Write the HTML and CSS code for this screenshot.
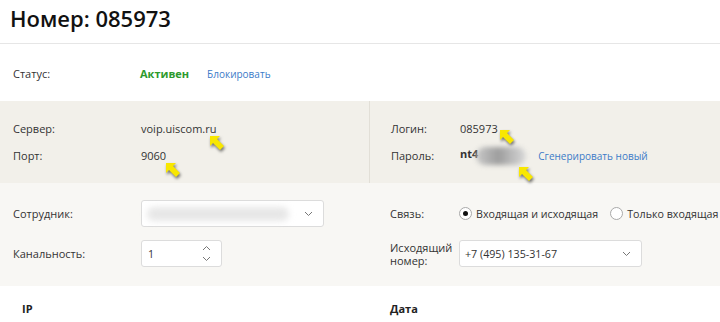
FILE: index.html
```html
<!DOCTYPE html>
<html lang="ru">
<head>
    <meta charset="UTF-8" />
    <meta name="viewport" content="width=device-width, initial-scale=1">
    <title>Номер: 085973</title>
    <link rel="stylesheet" href="styles.css">
</head>
<body>
<header class="page-head">
    <h1>Номер: 085973</h1>
</header>

<section class="status-row">
    <div class="field">
        <div class="field-label">Статус:</div>
        <span class="state-active">Активен</span>
        <a class="link" href="#">Блокировать</a>
    </div>
</section>

<section class="band band-creds">
    <div class="col">
        <div class="field">
            <div class="field-label">Сервер:</div>
            <span class="marked">voip.uiscom.ru
                <svg class="pointer p-server" width="17" height="17" viewBox="0 0 17 17"><polygon points="1,1 11,1 8,4 15,11 11,15 4,8 1,11" /></svg>
            </span>
        </div>
        <div class="field">
            <div class="field-label">Порт:</div>
            <span class="marked">9060
                <svg class="pointer p-port" width="17" height="17" viewBox="0 0 17 17"><polygon points="1,1 11,1 8,4 15,11 11,15 4,8 1,11" /></svg>
            </span>
        </div>
    </div>
    <div class="col col-right">
        <div class="field">
            <div class="field-label">Логин:</div>
            <span class="marked">085973
                <svg class="pointer p-login" width="17" height="17" viewBox="0 0 17 17"><polygon points="1,1 11,1 8,4 15,11 11,15 4,8 1,11" /></svg>
            </span>
        </div>
        <div class="field">
            <div class="field-label">Пароль:</div>
            <span class="marked"><strong>nt4</strong><span class="smudge"></span>
                <svg class="pointer p-pass" width="17" height="17" viewBox="0 0 17 17"><polygon points="1,1 11,1 8,4 15,11 11,15 4,8 1,11" /></svg>
            </span>
            <a class="link" href="#">Сгенерировать новый</a>
        </div>
    </div>
</section>

<section class="band band-settings">
    <div class="col">
        <div class="field">
            <div class="field-label">Сотрудник:</div>
            <div class="select select-wide">
                <span class="select-value"><span class="smudge smudge-light"></span></span>
                <svg class="chev" width="9" height="6" viewBox="0 0 9 6"><polyline points="1,1 4.5,4.5 8,1" /></svg>
            </div>
        </div>
        <div class="field">
            <div class="field-label">Канальность:</div>
            <div class="select select-num">
                <span class="select-value">1</span>
                <span class="spin">
                    <svg class="chev" width="9" height="6" viewBox="0 0 9 6"><polyline points="1,5 4.5,1.5 8,5" /></svg>
                    <svg class="chev" width="9" height="6" viewBox="0 0 9 6"><polyline points="1,1 4.5,4.5 8,1" /></svg>
                </span>
            </div>
        </div>
    </div>
    <div class="col col-right">
        <div class="field">
            <div class="field-label">Связь:</div>
            <label class="radio"><span class="dot checked"></span>Входящая и исходящая</label>
            <label class="radio"><span class="dot"></span>Только входящая</label>
        </div>
        <div class="field">
            <div class="field-label two-line">Исходящий номер:</div>
            <div class="select select-wide">
                <span class="select-value">+7 (495) 135-31-67</span>
                <svg class="chev" width="9" height="6" viewBox="0 0 9 6"><polyline points="1,1 4.5,4.5 8,1" /></svg>
            </div>
        </div>
    </div>
</section>

<div class="table-head">
    <div class="th th-ip">IP</div>
    <div class="th th-date">Дата</div>
</div>
</body>
</html>
```

FILE: styles.css
```css
body {
    margin: 0;
    font-family: "Open Sans", "DejaVu Sans", sans-serif;
    font-size: 11px;
    color: #333;
    background: #fff;
    overflow: hidden;
    width: 720px;
}
.page-head {
    padding: 4px 10px 10px;
    border-bottom: 1px solid #e6e6e6;
}
.page-head h1 {
    margin: 0;
    font-size: 22px;
    line-height: 29px;
    font-weight: 600;
    color: #111;
}

.status-row { padding: 16px 13px 14px; }
.state-active {
    color: #2d9a2d;
    font-weight: 700;
    margin-left: -1px;
    margin-right: 18px;
}
.link {
    color: #3c7bc8;
    font-size: 10px;
    text-decoration: none;
}

.field {
    display: flex;
    align-items: center;
    min-height: 27px;
    white-space: nowrap;
}
.field-label {
    width: 128px;
    flex: none;
}
.col-right .field-label { width: 69px; }
.field-label.two-line {
    white-space: normal;
    line-height: 13px;
}

.band {
    display: grid;
    grid-template-columns: 369px 1fr;
}
.band .col { padding-left: 13px; }
.band .col-right { padding-left: 21px; }
.band-creds { background: #f2f0ea; }
.band-creds .col { padding-top: 14px; padding-bottom: 14px; }
.band-creds .col-right { border-left: 1px solid #e2dfd7; }
.band-settings {
    background: #f8f7f4;
    padding: 17px 0 19px;
}
.band-settings .col {
    display: flex;
    flex-direction: column;
    gap: 13px;
}

/* yellow pointers drawn over the screenshot */
.marked { position: relative; }
.pointer {
    position: absolute;
    fill: #f8e700;
    filter: drop-shadow(1px 2px 1.5px rgba(0, 0, 0, .55));
}
.p-server { left: calc(100% - 7px); top: calc(100% - 1px); }
.p-port { left: calc(100% - 1px); top: calc(100% - 1px); }
.p-login { left: calc(100% + 1px); top: 55%; }
.p-pass { right: 3px; top: calc(100% + 1px); }

.smudge {
    display: inline-block;
    width: 50px;
    height: 18px;
    margin: 0 12px 0 -2px;
    vertical-align: middle;
    border-radius: 9px;
    background: linear-gradient(90deg, #c8c8c8, #9d9d9d 45%, #b9b9b9 70%, #d8d8d8);
    filter: blur(2.5px);
}
.smudge-light {
    width: 142px;
    height: 14px;
    margin: 0;
    border-radius: 7px;
    background: #e7e7e7;
    filter: blur(3px);
}

.select {
    display: flex;
    align-items: center;
    height: 25px;
    padding: 0 10px 0 5px;
    background: #fff;
    border: 1px solid #dcdcdc;
    border-radius: 3px;
}
.select-wide { width: 166px; }
.select-num { width: 64px; }
.select-value {
    flex: 1;
    font-size: 10.7px;
}
.select-num .select-value { padding-left: 1px; }
.chev {
    fill: none;
    stroke: #777;
    stroke-width: 1;
}
.spin {
    display: flex;
    flex-direction: column;
    gap: 5px;
}

.radio {
    display: flex;
    align-items: center;
    gap: 4px;
    margin-right: 12px;
    font-size: 10.7px;
}
.dot {
    width: 11px;
    height: 11px;
    border: 1px solid #a9a9a9;
    border-radius: 50%;
    background: #fff;
    position: relative;
}
.dot.checked::after {
    content: '';
    position: absolute;
    top: 3px;
    left: 3px;
    width: 5px;
    height: 5px;
    border-radius: 50%;
    background: #111;
}

.table-head {
    display: grid;
    grid-template-columns: 369px 1fr;
    padding-top: 15px;
}
.th {
    font-weight: 700;
    color: #222;
    line-height: 16px;
}
.th-ip { padding-left: 22px; }
.th-date { padding-left: 21px; }
```
